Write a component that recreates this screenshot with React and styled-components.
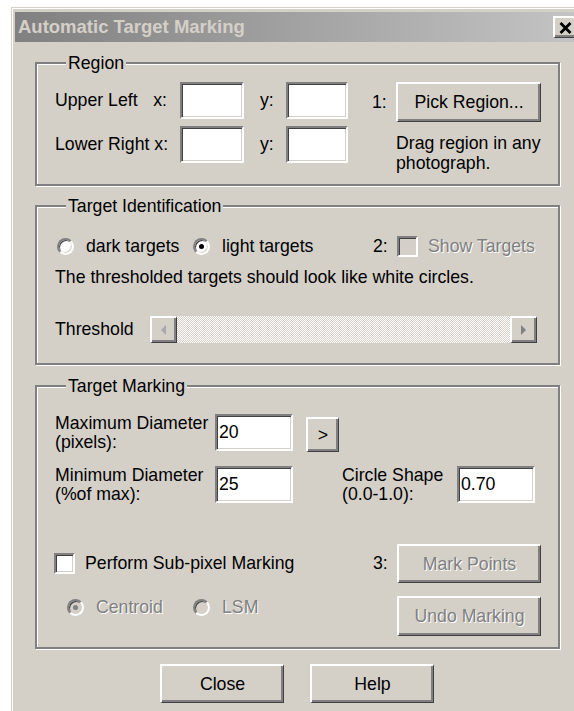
import React from "react";
import styled, { createGlobalStyle, css } from "styled-components";

const GlobalStyle = createGlobalStyle`
  html, body {
    margin: 0;
    background: #fff;
    overflow: hidden;
  }
  body {
    font-family: "Liberation Sans", Arial, sans-serif;
    font-size: 17.7px;
    color: #000;
  }
`;

const raised = css`
  border-style: solid;
  border-width: 2px 1px 1px 2px;
  border-color: #fff #404040 #404040 #fff;
  box-shadow: inset -2px -2px 0 #808080;
`;

const sunken = css`
  border-style: solid;
  border-width: 2px;
  border-color: #808080 #fff #fff #808080;
  box-shadow: inset 1px 1px 0 #404040, inset -1px -1px 0 #d4d0c8;
`;

const Window = styled.div`
  box-sizing: border-box;
  margin: 7px 0 0 11px;
  width: 572px;
  height: 720px;
  padding: 4px 4px 0 3px;
  background: #d4d0c8;
  border-top: 1px solid #d4d0c8;
  border-left: 1px solid #d4d0c8;
  box-shadow: inset 1px 1px 0 #fff;
`;

const TitleBar = styled.div`
  display: flex;
  align-items: center;
  justify-content: space-between;
  height: 30px;
  padding: 0 2px 0 3px;
  background: linear-gradient(to right, #808080, #c4c4c4);
`;

const Title = styled.span`
  font-weight: bold;
  font-size: 18.5px;
  color: #d4d0c8;
`;

const CloseBox = styled.div`
  box-sizing: border-box;
  display: flex;
  align-items: center;
  justify-content: center;
  width: 24px;
  height: 22px;
  background: #d4d0c8;
  ${raised};
`;

const Group = styled.fieldset`
  box-sizing: border-box;
  width: 525px;
  margin: ${(p) => p.$top}px 0 0 20px;
  padding: ${(p) => p.$pad};
  border: 2px solid #808080;
  box-shadow: inset 1px 1px 0 #fff, 1px 1px 0 #fff;
  min-inline-size: 0;
`;

const Caption = styled.legend`
  margin-left: 11px;
  padding: 0 2px;
  line-height: 20px;
  background: #d4d0c8;
`;

const RegionGrid = styled.div`
  display: grid;
  grid-template-columns: 125px 64px 42px 62px 48px 145px;
  grid-template-rows: 40px 37px;
  row-gap: 4px;
  align-items: start;
`;

const Cell = styled.div`
  display: flex;
  align-items: center;
  height: ${(p) => p.$h || 37}px;
  padding-left: ${(p) => p.$indent || 0}px;
  padding-right: ${(p) => p.$right || 0}px;
  white-space: nowrap;
`;

const Axis = styled.span`
  margin-left: auto;
`;

const Field = styled.input`
  box-sizing: border-box;
  width: ${(p) => p.$w}px;
  height: 37px;
  margin: 0;
  padding: 0 2px;
  font: inherit;
  color: #000;
  background: #fff;
  outline: none;
  ${sunken};
`;

const Button = styled.button`
  box-sizing: border-box;
  width: ${(p) => p.$w}px;
  height: ${(p) => p.$h}px;
  margin: 0;
  margin-top: ${(p) => p.$mt || 0}px;
  margin-left: ${(p) => p.$ml || 0}px;
  padding: 0;
  font: inherit;
  background: #d4d0c8;
  color: ${(p) => (p.disabled ? "#808080" : "#000")};
  text-shadow: ${(p) => (p.disabled ? "1px 1px 0 #fff" : "none")};
  ${raised};
`;

const Note = styled.div`
  margin-top: 7px;
  line-height: 20px;
  white-space: nowrap;
`;

const Row = styled.div`
  display: flex;
  align-items: ${(p) => p.$align || "center"};
  height: ${(p) => p.$h}px;
  margin-top: ${(p) => p.$mt || 0}px;
`;

const Option = styled.label`
  display: flex;
  align-items: center;
  gap: ${(p) => p.$gap || 12}px;
  width: ${(p) => (p.$w ? `${p.$w}px` : "auto")};
  margin-left: ${(p) => p.$ml || 0}px;
  flex: ${(p) => (p.$grow ? 1 : "none")};
  white-space: nowrap;
  color: ${(p) => (p.$off ? "#808080" : "#000")};
  text-shadow: ${(p) => (p.$off ? "1px 1px 0 #fff" : "none")};
`;

const RadioSet = styled.div`
  display: flex;
  align-items: center;
  flex: 1;
  height: 22px;
  padding-left: 12px;
`;

const RadioDot = styled.span`
  box-sizing: border-box;
  position: relative;
  flex: none;
  width: 17px;
  height: 17px;
  border-radius: 50%;
  background: ${(p) => (p.$off ? "#d4d0c8" : "#fff")};
  ${sunken};

  &::after {
    content: "";
    display: ${(p) => (p.$on ? "block" : "none")};
    position: absolute;
    left: 4px;
    top: 4px;
    width: 5px;
    height: 5px;
    border-radius: 50%;
    background: ${(p) => (p.$off ? "#808080" : "#000")};
  }
`;

const CheckBox = styled.span`
  box-sizing: border-box;
  flex: none;
  width: 21px;
  height: 21px;
  background: ${(p) => (p.$off ? "#d4d0c8" : "#fff")};
  ${sunken};
`;

const StepNo = styled.span`
  flex: none;
  width: 24px;
`;

const Hint = styled.div`
  margin-top: 9px;
  line-height: 20px;
  white-space: nowrap;
`;

const SliderLabel = styled.span`
  width: 95px;
`;

const ScrollBar = styled.div`
  display: flex;
  width: 387px;
  height: 27px;
`;

const ArrowBtn = styled.div`
  box-sizing: border-box;
  display: flex;
  align-items: center;
  justify-content: center;
  width: 27px;
  height: 27px;
  background: #d4d0c8;
  ${raised};
`;

const Track = styled.div`
  flex: 1;
  background: repeating-conic-gradient(#fff 0 25%, #d4d0c8 0 50%) 0 0 / 2px 2px;
`;

const TwoLine = styled.div`
  flex: none;
  width: ${(p) => p.$w}px;
  margin-left: ${(p) => p.$ml || 0}px;
  line-height: 19px;
  white-space: nowrap;
`;

const Footer = styled.div`
  display: flex;
  justify-content: center;
  gap: 26px;
  margin-top: 15px;
`;

const Radio = ({ on, off, label, ...rest }) => (
  <Option $off={off} {...rest}>
    <RadioDot $on={on} $off={off} />
    {label}
  </Option>
);

const Arrow = ({ dir, color }) => (
  <svg width="6" height="10" viewBox="0 0 6 10">
    <polygon
      points={dir === "left" ? "5,0 0,5 5,10" : "0,0 5,5 0,10"}
      fill={color}
    />
  </svg>
);

export default function App() {
  return (
    <>
      <GlobalStyle />
      <Window>
        <TitleBar>
          <Title>Automatic Target Marking</Title>
          <CloseBox>
            <svg width="13" height="12" viewBox="0 0 13 12">
              <path d="M1.5 1 L11.5 11 M11.5 1 L1.5 11" stroke="#000" strokeWidth="2.8" />
            </svg>
          </CloseBox>
        </TitleBar>

        <Group $top={11} $pad="9px 17px 21px 18px">
          <Caption>Region</Caption>
          <RegionGrid>
            <Cell $right={13}>
              Upper Left<Axis>x:</Axis>
            </Cell>
            <Field $w={64} />
            <Cell $indent={16}>y:</Cell>
            <Field $w={62} />
            <Cell $indent={24} $h={40}>1:</Cell>
            <Button $w={145} $h={40}>Pick Region...</Button>

            <Cell $right={13}>
              Lower Right<Axis>&nbsp;x:</Axis>
            </Cell>
            <Field $w={64} />
            <Cell $indent={16}>y:</Cell>
            <Field $w={62} />
            <span />
            <Note>
              Drag region in any
              <br />
              photograph.
            </Note>
          </RegionGrid>
        </Group>

        <Group $top={10} $pad="18px 17px 20px 18px">
          <Caption>Target Identification</Caption>
          <Row $h={24}>
            <Radio label="dark targets" $w={136} $ml={2} />
            <Radio label="light targets" on $w={180} />
            <StepNo>2:</StepNo>
            <Option $gap={10} $off>
              <CheckBox $off />
              Show Targets
            </Option>
          </Row>
          <Hint>The thresholded targets should look like white circles.</Hint>
          <Row $h={27} $mt={29}>
            <SliderLabel>Threshold</SliderLabel>
            <ScrollBar>
              <ArrowBtn>
                <Arrow dir="left" color="#a8a8a8" />
              </ArrowBtn>
              <Track />
              <ArrowBtn>
                <Arrow dir="right" color="#808080" />
              </ArrowBtn>
            </ScrollBar>
          </Row>
        </Group>

        <Group $top={11} $pad="18px 17px 11px 18px">
          <Caption>Target Marking</Caption>
          <Row $h={38} $align="flex-start">
            <TwoLine $w={160}>
              Maximum Diameter
              <br />
              (pixels):
            </TwoLine>
            <Field $w={78} defaultValue="20" />
            <Button $w={33} $h={35} $mt={3} $ml={13}>
              &gt;
            </Button>
          </Row>
          <Row $h={37} $mt={14} $align="flex-start">
            <TwoLine $w={160}>
              Minimum Diameter
              <br />
              (%of max):
            </TwoLine>
            <Field $w={78} defaultValue="25" />
            <TwoLine $w={115} $ml={49}>
              Circle Shape
              <br />
              (0.0-1.0):
            </TwoLine>
            <Field $w={78} defaultValue="0.70" />
          </Row>
          <Row $h={39} $mt={41}>
            <Option $gap={10} $ml={-1} $grow>
              <CheckBox />
              Perform Sub-pixel Marking
            </Option>
            <StepNo>3:</StepNo>
            <Button $w={144} $h={39} disabled>
              Mark Points
            </Button>
          </Row>
          <Row $h={40} $mt={13} $align="flex-start">
            <RadioSet>
              <Radio label="Centroid" on off $w={126} />
              <Radio label="LSM" off />
            </RadioSet>
            <Button $w={144} $h={40} disabled>
              Undo Marking
            </Button>
          </Row>
        </Group>

        <Footer>
          <Button $w={124} $h={39}>Close</Button>
          <Button $w={124} $h={39}>Help</Button>
        </Footer>
      </Window>
    </>
  );
}
